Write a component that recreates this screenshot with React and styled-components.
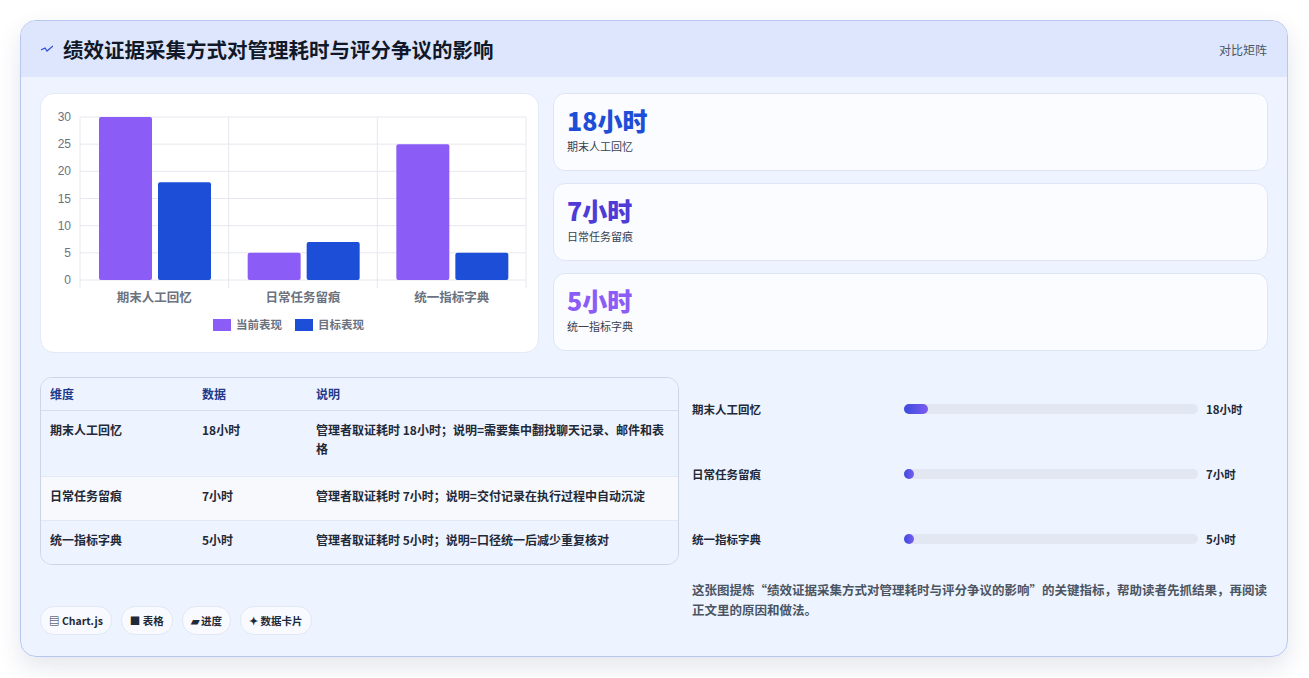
import React from 'react';
import styled, { createGlobalStyle } from 'styled-components';

const Global = createGlobalStyle`
  body { margin: 0; background: #fff; font-family: "Noto Sans CJK SC", "Noto Sans", sans-serif; }
`;

const Page = styled.div`
  padding: 20px 20px 20px 20px;
`;

const Card = styled.div`
  width: 1268px;
  height: 637px;
  box-sizing: border-box;
  border: 1px solid #b9c6ee;
  border-radius: 16px;
  background: linear-gradient(180deg, #eef3ff 0%, #edf4ff 100%);
  box-shadow: 0 10px 24px rgba(30, 50, 100, 0.12);
  overflow: hidden;
  display: flex;
  flex-direction: column;
`;

const Header = styled.div`
  height: 56px;
  background: #dde6fd;
  display: flex;
  align-items: center;
  justify-content: space-between;
  padding: 0 20px;
`;

const Title = styled.h1`
  margin: 0;
  font-size: 20.5px;
  font-weight: 700;
  color: #111827;
  display: flex;
  align-items: center;
  gap: 10px;
`;

const Tag = styled.span`
  font-size: 12px;
  color: #4b5563;
`;

const Body = styled.div`
  padding: 16px 19px 19px 19px;
  display: grid;
  grid-template-columns: 499px 1fr;
  column-gap: 14px;
  row-gap: 6px;
  flex: 1;
`;

const ChartBox = styled.div`
  background: #fff;
  border: 1px solid #e3e9f6;
  border-radius: 14px;
  height: 260px;
  box-sizing: border-box;
`;

const Kpis = styled.div`
  display: flex;
  flex-direction: column;
  gap: 12px;
`;

const Kpi = styled.div`
  height: 78px;
  box-sizing: border-box;
  background: #fbfcff;
  border: 1px solid #dde5f6;
  border-radius: 12px;
  padding: 10px 13px;
`;

const KpiValue = styled.div`
  font-size: 25px;
  font-weight: 800;
  color: ${(p) => p.$color};
  line-height: 32px;
`;

const KpiLabel = styled.div`
  font-size: 11px;
  color: #374151;
  margin-top: 2px;
`;

const Bottom = styled.div`
  display: flex;
  flex-direction: column;
  justify-content: space-between;
`;

const Split = styled.div`
  grid-column: 1 / span 2;
  display: grid;
  grid-template-columns: 639px 1fr;
  column-gap: 13px;
`;

const Table = styled.table`
  width: 100%;
  border-collapse: separate;
  border-spacing: 0;
  border: 1px solid #cdd6e6;
  border-radius: 12px;
  overflow: hidden;
  font-size: 12px;
  font-weight: 600;
  color: #1f2937;
  th { text-align: left; color: #1e3a8a; font-weight: 700; height: 32px; background: #eef4ff; border-bottom: 1px solid #d6deec; padding: 0 9px; }
  td { vertical-align: top; padding: 9px 9px; line-height: 19px; border-bottom: 1px solid #e3e9f4; }
  tr:last-child td { border-bottom: none; }
`;

const Row = styled.tr`
  background: ${(p) => (p.$alt ? '#f7f9fd' : '#eef4ff')};
  height: ${(p) => p.$h}px;
`;

const Pills = styled.div`
  display: flex;
  gap: 9px;
  margin-bottom: 2px;
`;

const Pill = styled.span`
  font-size: 10.5px;
  font-weight: 600;
  color: #1f2937;
  background: #f8faff;
  border: 1px solid #e2e8f3;
  border-radius: 14px;
  padding: 6px 8px;
`;

const Right = styled.div`
  display: flex;
  flex-direction: column;
`;

const Prog = styled.div`
  display: grid;
  grid-template-columns: 212px 1fr 62px;
  align-items: center;
  height: 65px;
  font-size: 11.5px;
  font-weight: 600;
  color: #1f2937;
`;

const Track = styled.div`
  height: 10px;
  border-radius: 5px;
  background: #e2e7f1;
  margin-right: 8px;
`;

const Fill = styled.div`
  height: 100%;
  border-radius: 5px;
  background: linear-gradient(90deg, #3b4bdc, #7c5cf0);
`;

const Note = styled.p`
  margin: 8px 0 0 0;
  font-size: 12.5px;
  line-height: 20px;
  color: #4b5563;
  font-weight: 600;
`;

const cats = ['期末人工回忆', '日常任务留痕', '统一指标字典'];
const cur = [30, 5, 25];
const tgt = [18, 7, 5];

function Chart() {
  const x0 = 39, y0 = 186, top = 23, w = 446;
  const h = y0 - top;
  const cw = w / 3;
  const ys = (v) => y0 - (v / 30) * h;
  return (
    <svg width="497" height="258" viewBox="0 0 497 258" style={{ display: 'block' }}>
      {[0, 5, 10, 15, 20, 25, 30].map((v) => (
        <g key={v}>
          <line x1={x0} x2={x0 + w} y1={ys(v)} y2={ys(v)} stroke="#e5e8ef" />
          <text x={x0 - 9} y={ys(v) + 4} textAnchor="end" fontSize="12" fill="#6b7280" fontFamily="Liberation Sans, sans-serif">{v}</text>
        </g>
      ))}
      {[0, 1, 2, 3].map((i) => (
        <line key={i} x1={x0 + i * cw} x2={x0 + i * cw} y1={top} y2={y0 + 8} stroke="#e5e8ef" />
      ))}
      {cats.map((c, i) => (
        <g key={c}>
          <rect x={x0 + i * cw + 19} y={ys(cur[i])} width="53" height={y0 - ys(cur[i])} rx="2" fill="#8b5cf6" />
          <rect x={x0 + i * cw + 78} y={ys(tgt[i])} width="53" height={y0 - ys(tgt[i])} rx="2" fill="#1d4ed8" />
          <text x={x0 + i * cw + cw / 2} y="208" textAnchor="middle" fontSize="12.5" fill="#6b7280" fontWeight="600">{c}</text>
        </g>
      ))}
      <rect x="172" y="225" width="18" height="12" fill="#8b5cf6" />
      <text x="195" y="235" fontSize="11.5" fill="#6b7280" fontWeight="600">当前表现</text>
      <rect x="254" y="225" width="18" height="12" fill="#1d4ed8" />
      <text x="277" y="235" fontSize="11.5" fill="#6b7280" fontWeight="600">目标表现</text>
    </svg>
  );
}

export default function App() {
  return (
    <Page>
      <Global />
      <Card>
        <Header>
          <Title>
            <svg width="12" height="10" viewBox="0 0 12 10"><path d="M0 6 L4 4 L6 7 L12 2" stroke="#2f4fd8" strokeWidth="1.3" fill="none" /></svg>
            绩效证据采集方式对管理耗时与评分争议的影响
          </Title>
          <Tag>对比矩阵</Tag>
        </Header>
        <Body>
          <ChartBox><Chart /></ChartBox>
          <Kpis>
            <Kpi><KpiValue $color="#1d4ed8">18小时</KpiValue><KpiLabel>期末人工回忆</KpiLabel></Kpi>
            <Kpi><KpiValue $color="#4f3bd6">7小时</KpiValue><KpiLabel>日常任务留痕</KpiLabel></Kpi>
            <Kpi><KpiValue $color="#8b5cf6">5小时</KpiValue><KpiLabel>统一指标字典</KpiLabel></Kpi>
          </Kpis>
          <Split>
            <Bottom>
              <Table>
                <thead><tr><th style={{ width: 134 }}>维度</th><th style={{ width: 96 }}>数据</th><th>说明</th></tr></thead>
                <tbody>
                  <Row $h={66}><td>期末人工回忆</td><td>18小时</td><td>管理者取证耗时 18小时；说明=需要集中翻找聊天记录、邮件和表格</td></Row>
                  <Row $h={44} $alt><td>日常任务留痕</td><td>7小时</td><td>管理者取证耗时 7小时；说明=交付记录在执行过程中自动沉淀</td></Row>
                  <Row $h={43}><td>统一指标字典</td><td>5小时</td><td>管理者取证耗时 5小时；说明=口径统一后减少重复核对</td></Row>
                </tbody>
              </Table>
              <Pills>
                <Pill>▤ Chart.js</Pill>
                <Pill>■ 表格</Pill>
                <Pill>▰ 进度</Pill>
                <Pill>✦ 数据卡片</Pill>
              </Pills>
            </Bottom>
            <Right>
              {[['期末人工回忆', 8, '18小时'], ['日常任务留痕', 3, '7小时'], ['统一指标字典', 3, '5小时']].map(([l, p, v]) => (
                <Prog key={l}>
                  <span>{l}</span>
                  <Track><Fill style={{ width: `${p}%`, minWidth: 10 }} /></Track>
                  <span>{v}</span>
                </Prog>
              ))}
              <Note>这张图提炼“绩效证据采集方式对管理耗时与评分争议的影响”的关键指标，帮助读者先抓结果，再阅读正文里的原因和做法。</Note>
            </Right>
          </Split>
        </Body>
      </Card>
    </Page>
  );
}
